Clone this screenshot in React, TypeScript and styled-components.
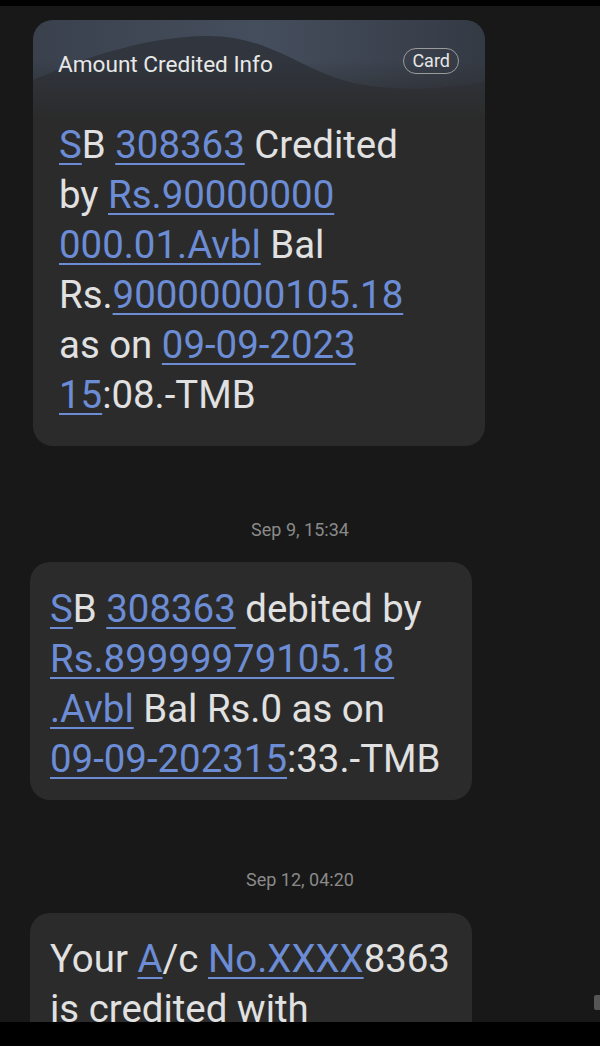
import React from "react";
import styled, { createGlobalStyle } from "styled-components";

const Global = createGlobalStyle`
  html, body { margin: 0; padding: 0; background: #000; }
  body { font-family: Roboto, "Noto Sans", sans-serif; }
  * { box-sizing: border-box; }
`;

const Page = styled.div`
  width: 600px;
  height: 1046px;
  display: flex;
  flex-direction: column;
  background: #000;
`;

const TopBar = styled.div`
  height: 6px;
  background: #000;
  flex: none;
`;

const BottomBar = styled.div`
  height: 24px;
  background: #000;
  flex: none;
`;

const Thread = styled.div`
  flex: 1;
  position: relative;
  overflow: hidden;
  background: #181818;
  display: flex;
  flex-direction: column;
  align-items: flex-start;
  padding-top: 14px;
`;

const Bubble = styled.div<{ $left: number; $width: number }>`
  margin-left: ${(p) => p.$left}px;
  width: ${(p) => p.$width}px;
  background: #2b2b2b;
  border-radius: 20px;
  overflow: hidden;
  flex: none;
`;

const Header = styled.div`
  position: relative;
  height: 100px;
  padding: 28px 26px 0 25px;
  display: flex;
  justify-content: space-between;
  align-items: flex-start;
`;

const HeaderArt = styled.svg`
  position: absolute;
  inset: 0;
  width: 100%;
  height: 100%;
`;

const HeaderTitle = styled.div`
  position: relative;
  font-size: 22.6px;
  color: #e8e8e8;
  line-height: 34px;
`;

const Pill = styled.div`
  position: relative;
  height: 26px;
  padding: 0 8px;
  border: 1.5px solid #9a9a9a;
  border-radius: 13px;
  font-size: 18px;
  line-height: 23px;
  color: #e6e6e6;
`;

const Body = styled.div<{ $pad: string }>`
  padding: ${(p) => p.$pad};
  font-size: 38.4px;
  line-height: 50px;
  color: #e1e1e1;
  white-space: nowrap;
`;

const Line = styled.div``;

const Link = styled.span`
  color: #6c8dd6;
  text-decoration: underline;
  text-decoration-thickness: 2px;
  text-underline-offset: 5px;
`;

const Stamp = styled.div<{ $top: number; $bottom: number }>`
  align-self: stretch;
  text-align: center;
  font-size: 18px;
  color: #8a8a8a;
  margin: ${(p) => p.$top}px 0 ${(p) => p.$bottom}px;
  line-height: 20px;
`;

const ScrollThumb = styled.div`
  position: absolute;
  right: 0;
  top: 989px;
  width: 6px;
  height: 15px;
  border-radius: 2px 0 0 2px;
  background: #555;
`;

type Seg = [string, boolean?];
type Msg = Seg[][];

const msg1: Msg = [
  [["S", true], ["B "], ["308363", true], [" Credited"]],
  [["by "], ["Rs.90000000", true]],
  [["000.01.Avbl", true], [" Bal"]],
  [["Rs."], ["90000000105.18", true]],
  [["as on "], ["09-09-2023", true]],
  [["15", true], [":08.-TMB"]],
];

const msg2: Msg = [
  [["S", true], ["B "], ["308363", true], [" debited by"]],
  [["Rs.89999979105.18", true]],
  [[".Avbl", true], [" Bal Rs.0 as on"]],
  [["09-09-202315", true], [":33.-TMB"]],
];

const msg3: Msg = [
  [["Your "], ["A", true], ["/c "], ["No.XXXX", true], ["8363"]],
  [["is credited with"]],
];

const Lines: React.FC<{ msg: Msg }> = ({ msg }) => (
  <>
    {msg.map((line, i) => (
      <Line key={i}>
        {line.map(([t, l], j) => (l ? <Link key={j}>{t}</Link> : <span key={j}>{t}</span>))}
      </Line>
    ))}
  </>
);

export default function App() {
  return (
    <Page>
      <Global />
      <TopBar />
      <Thread>
        <Bubble $left={33} $width={452}>
          <Header>
            <HeaderArt viewBox="0 0 452 100" preserveAspectRatio="none">
              <defs>
                <linearGradient id="hg" x1="0" y1="0" x2="1" y2="0">
                  <stop offset="0" stopColor="#3a414d" />
                  <stop offset="0.5" stopColor="#454e5d" />
                  <stop offset="1" stopColor="#343a44" />
                </linearGradient>
                <linearGradient id="fade" x1="0" y1="0" x2="0" y2="1">
                  <stop offset="0" stopColor="#2b2b2b" stopOpacity="0" />
                  <stop offset="1" stopColor="#2b2b2b" stopOpacity="1" />
                </linearGradient>
              </defs>
              <rect x="0" y="0" width="452" height="100" fill="url(#hg)" />
              <path d="M0 60 C 60 35, 110 18, 170 16 C 240 14, 270 55, 330 65 C 380 72, 420 68, 452 62 L452 100 L0 100 Z" fill="#30353e" />
              <rect x="0" y="40" width="452" height="60" fill="url(#fade)" />
            </HeaderArt>
            <HeaderTitle>Amount Credited Info</HeaderTitle>
            <Pill>Card</Pill>
          </Header>
          <Body $pad="0 20px 26px 26px">
            <Lines msg={msg1} />
          </Body>
        </Bubble>
        <Stamp $top={74} $bottom={22}>Sep 9, 15:34</Stamp>
        <Bubble $left={30} $width={442}>
          <Body $pad="22px 20px 16px 20px">
            <Lines msg={msg2} />
          </Body>
        </Bubble>
        <Stamp $top={70} $bottom={23}>Sep 12, 04:20</Stamp>
        <Bubble $left={30} $width={442}>
          <Body $pad="21px 20px 16px 20px">
            <Lines msg={msg3} />
          </Body>
        </Bubble>
        <ScrollThumb />
      </Thread>
      <BottomBar />
    </Page>
  );
}
